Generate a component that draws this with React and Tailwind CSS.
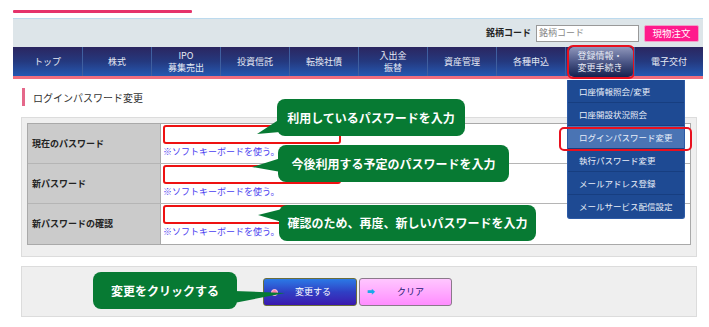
import React from "react";

const tabs = [
  ["トップ"],
  ["株式"],
  ["IPO", "募集売出"],
  ["投資信託"],
  ["転換社債"],
  ["入出金", "振替"],
  ["資産管理"],
  ["各種申込"],
  ["登録情報・", "変更手続き"],
  ["電子交付"],
];

const menu = [
  "口座情報照会/変更",
  "口座開設状況照会",
  "ログインパスワード変更",
  "執行パスワード変更",
  "メールアドレス登録",
  "メールサービス配信設定",
];

const rows = ["現在のパスワード", "新パスワード", "新パスワードの確認"];

function Bubble({ className, children }) {
  return (
    <div
      className={
        "absolute flex items-center justify-center rounded-[8px] bg-[#077a33] text-white font-bold text-[12px] leading-none " +
        className
      }
    >
      {children}
    </div>
  );
}

export default function App() {
  return (
    <div className="relative w-[709px] h-[327px] overflow-hidden bg-white font-['Noto_Sans_CJK_JP','Noto_Sans',sans-serif] text-[#333]">
      <div className="pt-[10px] pl-[13px]">
        <div className="w-[179px] h-[3px] bg-[#e5336b] rounded-[1px]" />
      </div>

      {/* header */}
      <div className="mt-[5px] ml-[13px] w-[690px]">
        <div className="h-[29px] bg-[#dde5e9] border-t border-[#bcdaee] flex items-center justify-end pr-[4px] gap-[5px]">
          <span className="text-[9px] font-bold text-[#222]">銘柄コード</span>
          <div className="w-[103px] h-[17px] bg-white border border-[#999] flex items-center px-[2px] text-[9px] text-[#888]">
            銘柄コード
          </div>
          <div className="w-[55px] h-[17px] bg-[#ff1a8c] border border-[#f0a0c8] rounded-[2px] flex items-center justify-center text-[9.5px] text-white">
            現物注文
          </div>
        </div>
        <div className="h-[29px] flex bg-gradient-to-b from-[#2a2660] via-[#24397f] to-[#2459b2]">
          {tabs.map((t, i) => (
            <div
              key={i}
              className={
                "relative w-[69px] h-full flex items-center justify-center " +
                (i > 0 ? "border-l border-[#3f5fa0]" : "")
              }
            >
              {i === 8 ? (
                <>
                  <div className="absolute left-[3px] right-[1px] top-[0px] bottom-[-1px] rounded-[5px] bg-gradient-to-b from-[#9097bb] via-[#4c5787] to-[#16224f]" />
                  <div className="absolute left-[1px] right-[-1px] top-[-2px] bottom-[-3px] rounded-[6px] border-2 border-[#e8101e]" />
                </>
              ) : null}
              <div className="relative flex flex-col items-center gap-[0px] text-center text-[9px] leading-[12px] text-[#e6eaf4]">
                {t.map((l, j) => (
                  <span key={j} className="block h-[12px] overflow-visible">{l}</span>
                ))}
              </div>
            </div>
          ))}
        </div>
        <div className="h-[3px] bg-[#f06e7e]" />
      </div>

      {/* heading */}
      <div className="mt-[9px] ml-[22px] flex items-center h-[18px]">
        <div className="w-[3px] h-[18px] bg-[#e5688a]" />
        <span className="ml-[8px] text-[10px] text-[#333]">ログインパスワード変更</span>
      </div>

      {/* form */}
      <div className="mt-[11px] ml-[21px] w-[676px] h-[140px] pt-[5px] px-[5px] bg-[#efefef] border border-[#dcdcdc]">
        <div className="w-full border border-[#a9a9a9] bg-white">
          {rows.map((r, i) => (
            <div
              key={i}
              className={"flex h-[40px] " + (i < 2 ? "border-b border-[#b5b5b5]" : "")}
            >
              <div className="w-[133px] h-full bg-[#cbcbcb] border-r border-[#a9a9a9] flex items-center pl-[4px] text-[9px] font-bold text-[#222]">
                {r}
              </div>
              <div className="pl-[2px] pt-[1px]">
                <div className="w-[178px] h-[19px] rounded-[3px] border-2 border-[#ee1111] bg-white" />
                <div className="mt-[1px] text-[9px] leading-[13px] text-[#4a3ef0]">※ソフトキーボードを使う。</div>
              </div>
            </div>
          ))}
        </div>
      </div>

      {/* bottom */}
      <div className="mt-[9px] ml-[21px] w-[676px] h-[51px] bg-[#efefef] border border-[#dcdcdc] flex items-center pl-[241px] gap-[2px]">
        <div className="relative w-[94px] h-[28px] rounded-[3px] border border-[#6b6e3a] bg-gradient-to-b from-[#2b79e6] via-[#2f3fc4] to-[#3a16ae] flex items-center justify-center text-[9px] text-white">
          <div className="absolute left-[7px] top-[10px] w-[7px] h-[7px] rounded-full bg-[#ff7fb0] border border-[#ffd0e0]" />
          <span className="ml-[6px]">変更する</span>
        </div>
        <div className="relative w-[93px] h-[28px] rounded-[3px] border border-[#8a7a8a] bg-gradient-to-b from-[#ffc6ff] to-[#ff8cff] flex items-center justify-center text-[9px] text-[#1a1a70]">
          <span className="absolute left-[7px] top-[8px] text-[8px] leading-[10px] text-[#1aa8e8]">➡</span>
          <span className="ml-[10px]">クリア</span>
        </div>
      </div>

      {/* dropdown */}
      <div className="absolute left-[567px] top-[80px] w-[118px] bg-[#1e4a93] rounded-b-[3px] border-x border-b border-[#2c5aa6]">
        {menu.map((m, i) => (
          <div
            key={i}
            className={
              "h-[23px] flex items-center pl-[11px] text-[8.5px] text-[#e8eef8] " +
              (i === 2 ? "bg-[#4a74b4] " : "") +
              (i < 5 ? "border-b border-[#173e80]" : "")
            }
          >
            {m}
          </div>
        ))}
      </div>
      <div className="absolute left-[559px] top-[127px] w-[133px] h-[24px] rounded-[5px] border-2 border-[#e8101e]" />

      {/* callout tails */}
      <svg className="absolute left-0 top-0 pointer-events-none" width="709" height="327">
        <polygon points="280,119 257,134 280,132" fill="#077a33" />
        <polygon points="281,158 252,167 281,172" fill="#077a33" />
        <polygon points="282,209 258,215 282,222" fill="#077a33" />
        <polygon points="234,291 285,293 234,303" fill="#077a33" />
      </svg>

      <Bubble className="left-[277px] top-[99px] w-[188px] h-[37px]">利用しているパスワードを入力</Bubble>
      <Bubble className="left-[278px] top-[145px] w-[231px] h-[37px]">今後利用する予定のパスワードを入力</Bubble>
      <Bubble className="left-[279px] top-[205px] w-[257px] h-[36px]">確認のため、再度、新しいパスワードを入力</Bubble>
      <Bubble className="left-[93px] top-[272px] w-[144px] h-[37px]">変更をクリックする</Bubble>
    </div>
  );
}
